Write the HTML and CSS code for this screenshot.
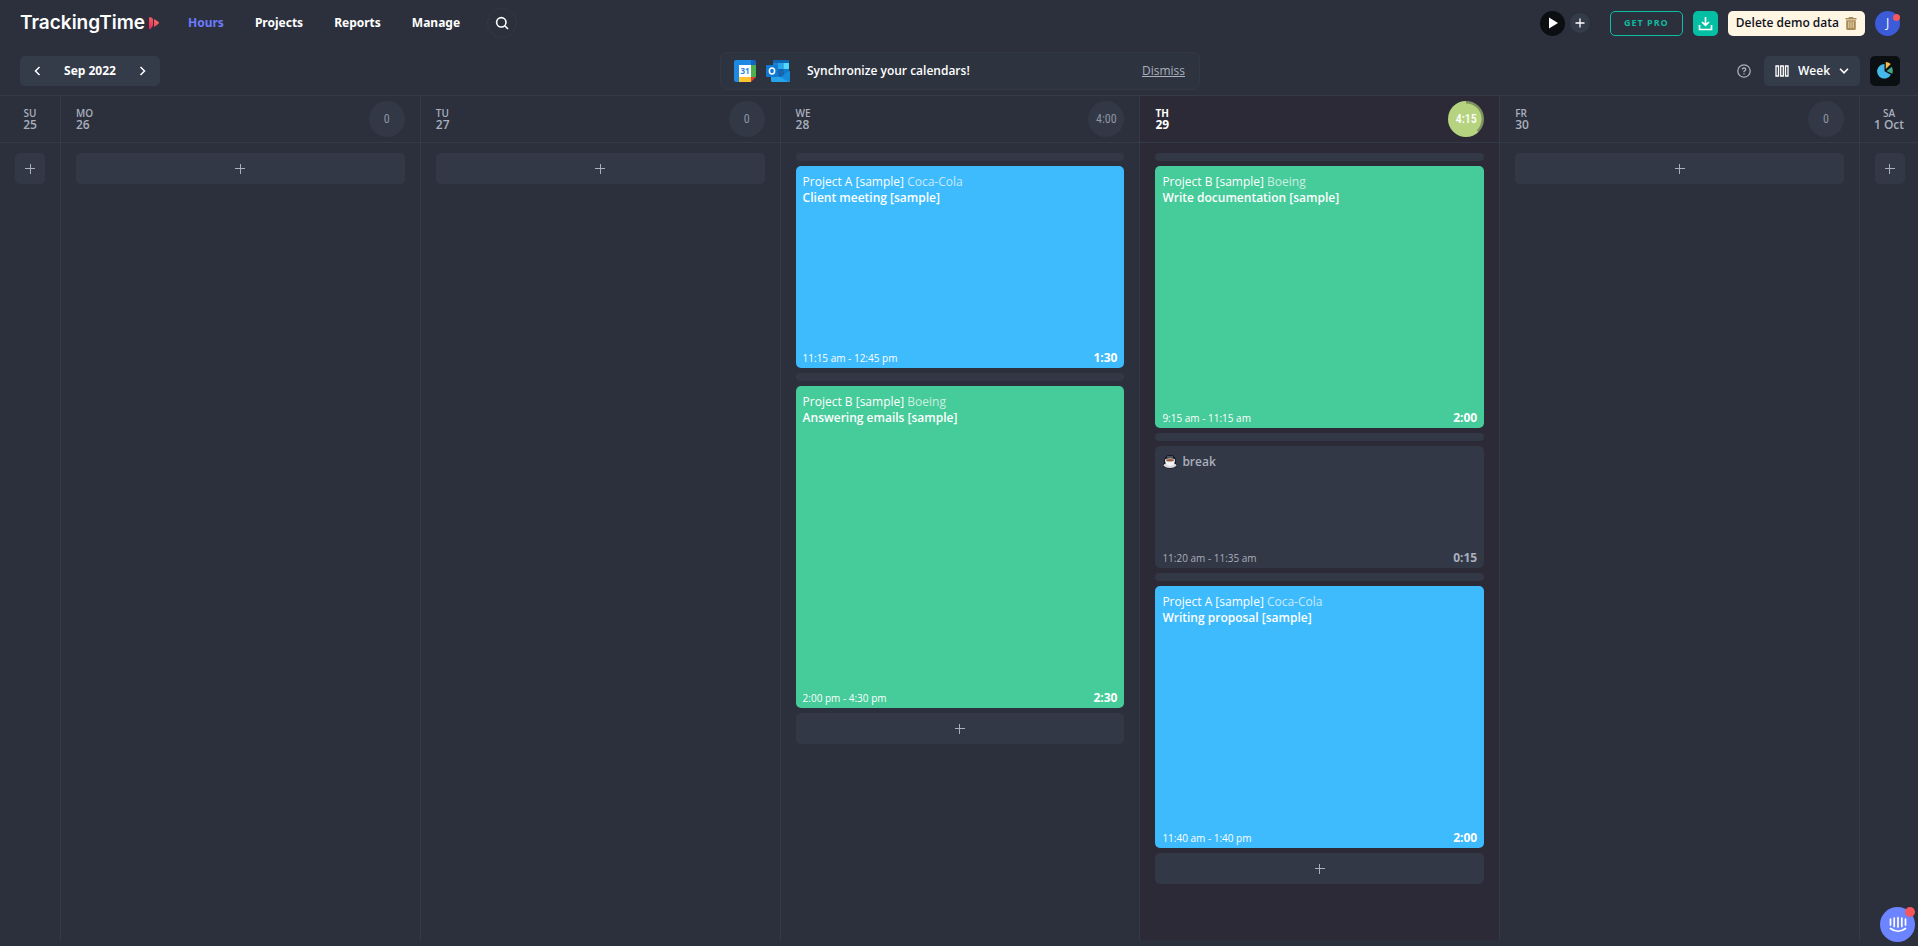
FILE: index.html
```html
<!DOCTYPE html>
<html lang="en">
<head>
<meta charset="utf-8">
<meta name="viewport" content="width=device-width, initial-scale=1">
<title>TrackingTime - Hours</title>
<link rel="stylesheet" href="styles.css">
</head>
<body>
<header class="topbar">
  <a class="logo" href="#">TrackingTime<svg class="logo-mark" width="12" height="14" viewBox="0 0 12 14"><defs><linearGradient id="lg" x1="0" y1="1" x2="1" y2="0"><stop offset="0" stop-color="#ee1f56"/><stop offset="1" stop-color="#f9846a"/></linearGradient></defs><path fill="url(#lg)" d="M1 2Q1 1 2 1L4 2Q5 2.500 5 3.500V8.500Q5 10 4 11L2.500 13Q1 13.500 1 12ZM6 4Q6 3 7 3.500L10.500 6Q11.500 7 10.500 7.800L7 10.500Q6 11 6 10Z"/></svg></a>
  <nav class="nav">
    <a class="nav-link active" href="#">Hours</a>
    <a class="nav-link" href="#">Projects</a>
    <a class="nav-link" href="#">Reports</a>
    <a class="nav-link" href="#">Manage</a>
  </nav>
  <button class="search" aria-label="Search"><svg width="14" height="14" viewBox="0 0 14 14" fill="none" stroke="#fff" stroke-width="1.600"><circle cx="6.300" cy="6.300" r="4.700"/><path d="M9.800 9.800L13 13"/></svg></button>
  <div class="actions">
    <div class="timer">
      <button class="play" aria-label="Start timer"><svg width="9" height="12" viewBox="0 0 9 12"><path fill="#fff" d="M0 0.500L9 6L0 11.500Z"/></svg></button>
      <button class="mini-add" aria-label="Add entry"><svg width="10" height="10" viewBox="0 0 10 10" stroke="#fff" stroke-width="1.300"><path d="M5 0.500V9.500M0.500 5H9.500"/></svg></button>
    </div>
    <button class="get-pro">GET PRO</button>
    <button class="download" aria-label="Download"><svg width="15" height="15" viewBox="0 0 15 15" fill="none" stroke="#fff" stroke-width="1.700"><path d="M7.500 1V9M4 6L7.500 9.300L11 6M1.500 9V13.500H13.500V9"/></svg></button>
    <button class="delete">Delete demo data<svg width="12" height="13" viewBox="0 0 12 13"><path fill="#a98c55" d="M4 0H8L8.500 1H11.500V2.500H0.500V1H3.500ZM1.200 3.300H10.800V11.500Q10.800 13 9.300 13H2.700Q1.200 13 1.200 11.500Z"/><path stroke="#e8d9b8" d="M3.800 4.500V11M6 4.500V11M8.200 4.500V11"/></svg></button>
    <button class="avatar" aria-label="Account">J<span class="dot"></span></button>
  </div>
</header>

<div class="toolbar">
  <div class="date-nav">
    <button class="arrow" aria-label="Previous week"><svg width="7" height="10" viewBox="0 0 7 10" fill="none" stroke="#fff" stroke-width="1.500"><path d="M5.500 1L1.500 5L5.500 9"/></svg></button>
    <span>Sep 2022</span>
    <button class="arrow" aria-label="Next week"><svg width="7" height="10" viewBox="0 0 7 10" fill="none" stroke="#fff" stroke-width="1.500"><path d="M1.500 1L5.500 5L1.500 9"/></svg></button>
  </div>
  <div class="banner">
    <svg width="22" height="22" viewBox="0 0 22 22"><path fill="#1e88e5" d="M0 2Q0 0 2 0H17V5H5V17H0Z"/><path fill="#1565c0" d="M17 0H20Q22 0 22 2V5H17Z"/><path fill="#4caf50" d="M17 5H22V17H17Z"/><path fill="#ffc42e" d="M5 17H17V22H5Z"/><path fill="#1e88e5" d="M0 17H5V22H2Q0 22 0 20Z"/><path fill="#e53935" d="M17 17H22L17 22Z"/><path fill="#fff" d="M5 5H17V17H5Z"/><text x="11" y="14" text-anchor="middle" class="cal-num">31</text></svg>
    <svg class="outlook" width="24" height="22" viewBox="0 0 24 22"><path fill="#0f66b5" d="M7 1Q7 0 8 0H22Q23 0 23 1V12H7Z"/><path fill="#1f7fd0" d="M7 3H12V9H7Z"/><path fill="#28a4e8" d="M12 3H17.500V9H12Z"/><path fill="#50d9ff" d="M17.500 3H23V9H17.500Z"/><path fill="#1565b0" d="M12 9H17.500V15H12Z"/><path fill="#0f78cf" d="M17.500 9H23V15H17.500Z"/><path fill="#27a3ea" d="M5 13L14.500 17L24 11V20.500Q24 22 22.500 22H6.500Q5 22 5 20.500Z"/><path fill="#168bdc" d="M14.500 17L24 11V20.500Q24 22 22.500 22Z"/><path fill="#1565b0" d="M12 13H17.500V15L14.500 17L12 16Z"/><rect x="0" y="5" width="12" height="12" rx="1" fill="#1079d2"/><ellipse cx="6" cy="11" rx="2.600" ry="3" fill="none" stroke="#fff" stroke-width="1.500"/></svg>
    <strong>Synchronize your calendars!</strong>
    <a class="dismiss" href="#">Dismiss</a>
  </div>
  <div class="view-tools">
    <button class="help" aria-label="Help"><svg width="14" height="14" viewBox="0 0 14 14" fill="none" stroke="#a9afbd" stroke-width="1.300"><circle cx="7" cy="7" r="6.200"/><path d="M5.200 5.600Q5.200 4 7 4T8.800 5.600Q8.800 6.500 7 7.300V8.300M7 9.300V10.600"/></svg></button>
    <button class="view"><svg width="14" height="12" viewBox="0 0 14 12" fill="none" stroke="#fff" stroke-width="1.300"><path d="M1 1H3.500V11H1ZM5.700 1H8.300V11H5.700ZM10.500 1H13V11H10.500Z"/></svg>Week<svg width="10" height="6" viewBox="0 0 10 6" fill="none" stroke="#fff" stroke-width="1.600"><path d="M1 0.800L5 4.800L9 0.800"/></svg></button>
    <button class="chart" aria-label="Summary"><svg width="16" height="17" viewBox="0 0 16 17"><path fill="#45b9ea" d="M7.500 2A7.300 7.300 0 1 0 13.800 12.800L7.500 9.300Z"/><path fill="#f7bd45" d="M8.800 7V0Q11.500 0 13.800 2Z"/><path fill="#45a886" d="M9.500 9L14.800 4.800Q16.500 8.500 15.200 11.800Z"/></svg></button>
  </div>
</div>

<main class="week">
  <section class="day narrow">
    <div class="day-head"><h2>SU<b>25</b></h2></div>
    <div class="day-body"><button class="add" aria-label="Add"></button></div>
  </section>
  <section class="day">
    <div class="day-head"><h2>MO<b>26</b></h2><span class="total">0</span></div>
    <div class="day-body"><button class="add" aria-label="Add"></button></div>
  </section>
  <section class="day">
    <div class="day-head"><h2>TU<b>27</b></h2><span class="total">0</span></div>
    <div class="day-body"><button class="add" aria-label="Add"></button></div>
  </section>
  <section class="day">
    <div class="day-head"><h2>WE<b>28</b></h2><span class="total">4:00</span></div>
    <div class="day-body">
      <button class="slot" aria-label="Insert"></button>
      <article class="card blue h90"><p>Project A [sample] <span>Coca-Cola</span></p><h3>Client meeting [sample]</h3><footer><time>11:15 am - 12:45 pm</time><b>1:30</b></footer></article>
      <button class="slot" aria-label="Insert"></button>
      <article class="card green h150"><p>Project B [sample] <span>Boeing</span></p><h3>Answering emails [sample]</h3><footer><time>2:00 pm - 4:30 pm</time><b>2:30</b></footer></article>
      <button class="add" aria-label="Add"></button>
    </div>
  </section>
  <section class="day today">
    <div class="day-head"><h2>TH<b>29</b></h2><span class="total">4:15</span></div>
    <div class="day-body">
      <button class="slot" aria-label="Insert"></button>
      <article class="card green h120"><p>Project B [sample] <span>Boeing</span></p><h3>Write documentation [sample]</h3><footer><time>9:15 am - 11:15 am</time><b>2:00</b></footer></article>
      <button class="slot" aria-label="Insert"></button>
      <article class="card break h15"><h3><svg width="16" height="14" viewBox="0 0 16 14"><path fill="#14161c" d="M5 0.500Q8 -0.500 11 0.500L13.500 3.500L14 8L15 11Q14 13.500 8 13.500T1 11L2 8L2.500 3.500Z"/><ellipse cx="8" cy="10.300" rx="6.300" ry="2.700" fill="#d8d8dc"/><path fill="#f4f4f6" d="M3 5H13Q13 10.500 8 11Q3 10.500 3 5Z"/><ellipse cx="8" cy="5" rx="5" ry="1.800" fill="#e6e6ea"/><ellipse cx="8" cy="5.200" rx="4" ry="1.200" fill="#9b5a3c"/><path stroke="#8c8f99" d="M6 1V3M8 1V3M10 1V3"/></svg>break</h3><footer><time>11:20 am - 11:35 am</time><b>0:15</b></footer></article>
      <button class="slot" aria-label="Insert"></button>
      <article class="card blue h120"><p>Project A [sample] <span>Coca-Cola</span></p><h3>Writing proposal [sample]</h3><footer><time>11:40 am - 1:40 pm</time><b>2:00</b></footer></article>
      <button class="add" aria-label="Add"></button>
    </div>
  </section>
  <section class="day">
    <div class="day-head"><h2>FR<b>30</b></h2><span class="total">0</span></div>
    <div class="day-body"><button class="add" aria-label="Add"></button></div>
  </section>
  <section class="day narrow">
    <div class="day-head"><h2>SA<b>1 Oct</b></h2></div>
    <div class="day-body"><button class="add" aria-label="Add"></button></div>
  </section>
</main>

<button class="chat" aria-label="Open chat"><svg width="18" height="17" viewBox="0 0 18 17" fill="none" stroke="#fff" stroke-width="1.700" stroke-linecap="round"><path d="M1.500 3V9M5.200 2V10.500M9 1.500V11M12.800 2V10.500M16.500 3V9M1.500 12.500Q9 18 16.500 12.500"/></svg><span class="dot"></span></button>
</body>
</html>
```
FILE: styles.css
```css
* { box-sizing: border-box; }
body {
  margin: 0;
  min-height: 100vh;
  display: flex;
  flex-direction: column;
  padding-bottom: 6px;
  background: #2b303c;
  color: #fff;
  font-family: "Segoe UI", "Open Sans", "Noto Sans", sans-serif;
  font-size: 12px;
  line-height: 16px;
}
a { color: inherit; text-decoration: none; }
button {
  display: flex;
  align-items: center;
  justify-content: center;
  padding: 0;
  border: 0;
  background: none;
  color: inherit;
  font: inherit;
  cursor: pointer;
}
h2, h3, p { margin: 0; font-size: inherit; }
svg { flex: none; }

.topbar { display: flex; align-items: center; height: 46px; padding: 0 18px 0 20px; }
.logo {
  display: flex;
  align-items: center;
  gap: 3px;
  font: 600 19px/24px Inter, sans-serif;
}
.nav { display: flex; gap: 31px; margin-left: 28px; }
.nav-link { font-family: "Segoe UI", "Noto Sans", sans-serif; font-weight: 700; }
.nav-link.active { color: #6c7bff; }
.search {
  width: 30px;
  height: 30px;
  margin-left: 27px;
  border: 1px solid #323844;
  border-radius: 50%;
}
.actions { display: flex; align-items: center; gap: 10px; margin-left: auto; }
.timer { display: flex; align-items: center; gap: 5px; margin-right: 10px; }
.play { width: 25px; height: 25px; padding-left: 2px; border-radius: 50%; background: #0c0f12; }
.mini-add { width: 20px; height: 20px; border-radius: 50%; background: #343b49; }
.get-pro {
  width: 73px;
  height: 25px;
  border: 1px solid #0bbfa5;
  border-radius: 5px;
  color: #12b8a0;
  font-size: 9px;
  font-weight: 700;
  letter-spacing: 1px;
}
.download { width: 25px; height: 25px; border-radius: 5px; background: #05bfa5; }
.delete {
  gap: 6px;
  height: 25px;
  padding: 0 8px;
  border-radius: 5px;
  background: #fff6e3;
  color: #10131c;
  font-weight: 600;
}
.avatar {
  position: relative;
  width: 25px;
  height: 25px;
  border-radius: 50%;
  background: #3c5bd9;
}
.dot {
  position: absolute;
  top: 3px;
  right: 0;
  width: 7px;
  height: 7px;
  border-radius: 50%;
  background: #f5575a;
}

.toolbar {
  display: grid;
  grid-template-columns: 1fr 480px 1fr;
  align-items: center;
  height: 49px;
  padding: 0 18px 0 20px;
}
.date-nav {
  display: flex;
  align-items: center;
  justify-content: space-between;
  width: 140px;
  height: 30px;
  border-radius: 5px;
  background: #343b49;
  font-weight: 700;
}
.arrow { width: 35px; height: 30px; }
.banner {
  display: flex;
  align-items: center;
  height: 38px;
  padding: 0 14px 0 13px;
  border: 1px solid #323844;
  border-radius: 6px;
  background: #2e343f;
}
.banner strong { font-weight: 600; }
.cal-num { fill: #1e88e5; font: 700 8px "Noto Sans", sans-serif; }
.outlook { margin: 0 17px 0 10px; }
.dismiss { margin-left: auto; color: #a9afbd; text-decoration: underline; }
.view-tools { display: flex; align-items: center; justify-content: flex-end; }
.help { margin-right: 13px; }
.view {
  gap: 9px;
  width: 96px;
  height: 30px;
  margin-right: 10px;
  border-radius: 5px;
  background: #343b49;
  font-weight: 600;
}
.chart { width: 30px; height: 30px; border-radius: 5px; background: #0c0f12; }

.week {
  display: grid;
  grid-template-columns: 60px repeat(5, minmax(0, 1fr)) 59px;
  flex: 1;
  border-top: 1px solid #343a47;
}
.day { border-left: 1px solid #343a47; }
.day:first-child { border-left: 0; }
.day-head {
  display: flex;
  align-items: center;
  justify-content: space-between;
  height: 47px;
  padding: 0 15px;
  border-bottom: 1px solid #343a47;
  color: #a9afbd;
}
.day-head h2 { font-size: 10px; line-height: 12px; font-weight: 600; }
.day-head b { display: block; font-size: 12px; font-weight: 600; }
.narrow .day-head { justify-content: center; padding: 0; text-align: center; white-space: nowrap; }
.total {
  display: flex;
  align-items: center;
  justify-content: center;
  width: 36px;
  height: 36px;
  border-radius: 50%;
  background: #323845;
  color: #8f95a3;
  font: 12px "Roboto Condensed", "Roboto", sans-serif;
}
.today { background: #2c2a36; }
.today h2 { color: #fff; }
.today h2, .today h2 b { font-weight: 700; }
.today .total {
  background: radial-gradient(circle, #b6d47f 15px, transparent 16px), conic-gradient(#7d9460 0 38%, #b6d47f 38%);
  color: #fff;
  font-weight: 500;
}
.day-body { display: flex; flex-direction: column; gap: 5px; padding: 10px 15px; }
.narrow .day-body { padding: 10px 13px 10px 15px; }
.narrow:first-child .day-body { padding: 10px 15px; }
.add {
  height: 31px;
  border-radius: 5px;
  background:
    linear-gradient(#a9afbd, #a9afbd) center / 10px 1px no-repeat,
    linear-gradient(#a9afbd, #a9afbd) center / 1px 10px no-repeat,
    #323845;
}
.slot { height: 8px; border-radius: 4px; background: #323845; }
.card {
  display: flex;
  flex-direction: column;
  padding: 8px 7px 2px;
  border-radius: 5px;
}
.card p span { opacity: 0.7; }
.card h3 { display: flex; align-items: center; gap: 4px; font-weight: 600; }
.card footer { display: flex; align-items: center; justify-content: space-between; margin-top: auto; font-size: 10px; }
.card footer b { font-size: 12px; }
.blue { background: #3dbbfd; }
.green { background: #46cb9a; }
.break { background: #323845; color: #a9afbd; }
.h15 { height: 122px; }
.h90 { height: 202px; }
.h120 { height: 262px; }
.h150 { height: 322px; }

.chat {
  position: fixed;
  right: 3px;
  bottom: 4px;
  width: 35px;
  height: 35px;
  border-radius: 50%;
  background: #6c84ff;
}
.chat .dot { top: 0; width: 10px; height: 10px; }
```
